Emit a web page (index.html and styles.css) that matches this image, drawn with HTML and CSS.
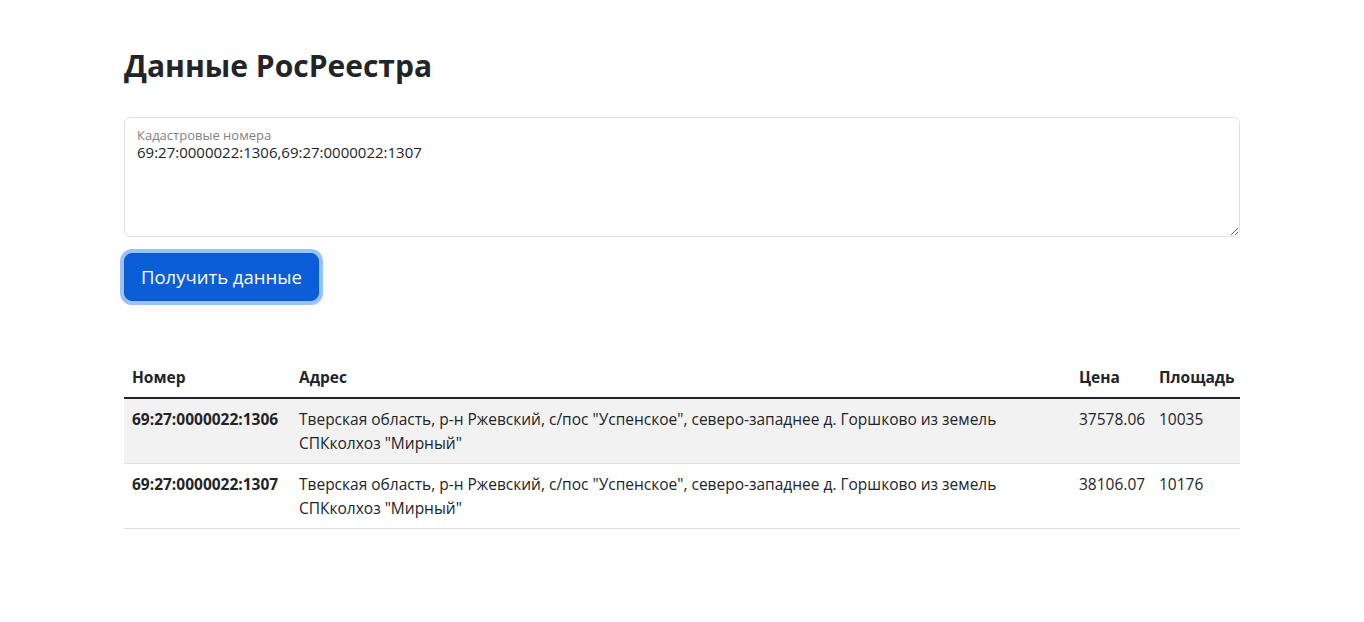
FILE: index.html
```html
<!DOCTYPE html>
<html lang="ru">
<head>
<meta charset="utf-8">
<title>Данные РосРеестра</title>
<link rel="stylesheet" href="styles.css">
</head>
<body>
<main class="container">
  <h1 class="title">Данные РосРеестра</h1>
  <form class="query">
    <div class="floating">
      <textarea class="field" id="cad">69:27:0000022:1306,69:27:0000022:1307</textarea>
      <label class="floating-label" for="cad">Кадастровые номера</label>
    </div>
    <button type="button" class="btn">Получить данные</button>
  </form>
  <table class="results">
    <colgroup>
      <col class="c-num">
      <col class="c-addr">
      <col class="c-price">
      <col class="c-area">
    </colgroup>
    <thead>
      <tr><th>Номер</th><th>Адрес</th><th>Цена</th><th>Площадь</th></tr>
    </thead>
    <tbody>
      <tr>
        <td class="id">69:27:0000022:1306</td>
        <td>Тверская область, р-н Ржевский, с/пос "Успенское", северо-западнее д. Горшково из земель СПКколхоз "Мирный"</td>
        <td>37578.06</td>
        <td>10035</td>
      </tr>
      <tr>
        <td class="id">69:27:0000022:1307</td>
        <td>Тверская область, р-н Ржевский, с/пос "Успенское", северо-западнее д. Горшково из земель СПКколхоз "Мирный"</td>
        <td>38106.07</td>
        <td>10176</td>
      </tr>
    </tbody>
  </table>
</main>
</body>
</html>
```
FILE: styles.css
```css
* { box-sizing: border-box; }
html, body { margin: 0; padding: 0; background: #fff; }
body {
  font-family: "Open Sans", "Noto Sans", sans-serif;
  font-size: 16px;
  line-height: 24px;
  color: #212529;
}
.container {
  max-width: 1140px;
  margin: 0 auto;
  padding: 47px 12px 0;
}
.title {
  margin: 0 0 32px;
  font-size: 30px;
  line-height: 38px;
  font-weight: 700;
  color: #212529;
}
.query { margin: 0; }
.floating {
  position: relative;
  margin-bottom: 16px;
}
.field {
  display: block;
  width: 100%;
  height: 120px;
  padding: 22px 12px 8px;
  border: 1px solid #dee2e6;
  border-radius: 6px;
  font-family: inherit;
  font-size: 15px;
  line-height: 24px;
  color: #212529;
  background: #fff;
  resize: vertical;
  outline: none;
}
.floating-label {
  position: absolute;
  top: 10px;
  left: 13px;
  font-size: 13px;
  line-height: 16px;
  color: #808386;
  pointer-events: none;
}
.btn {
  display: inline-block;
  padding: 8px 16px;
  font-family: inherit;
  font-size: 18.5px;
  line-height: 30px;
  color: #fff;
  background: #0b5ed7;
  border: 1px solid #0a58ca;
  border-radius: 8px;
  box-shadow: 0 0 0 4px rgba(49, 132, 253, 0.5);
  cursor: pointer;
}
.results {
  width: 100%;
  margin-top: 56px;
  border-collapse: collapse;
  table-layout: fixed;
  font-size: 15.5px;
}
.c-num { width: 167px; }
.c-price { width: 80px; }
.c-area { width: 89px; }
.results th, .results td {
  padding: 8px;
  text-align: left;
  vertical-align: top;
  line-height: 24px;
}
.results th {
  font-weight: 700;
  border-bottom: 2px solid #212529;
}
.results td { border-bottom: 1px solid #dee2e6; }
.results tbody tr:nth-child(odd) td { background: #f2f2f2; }
.results td.id { font-weight: 700; white-space: nowrap; }
```
